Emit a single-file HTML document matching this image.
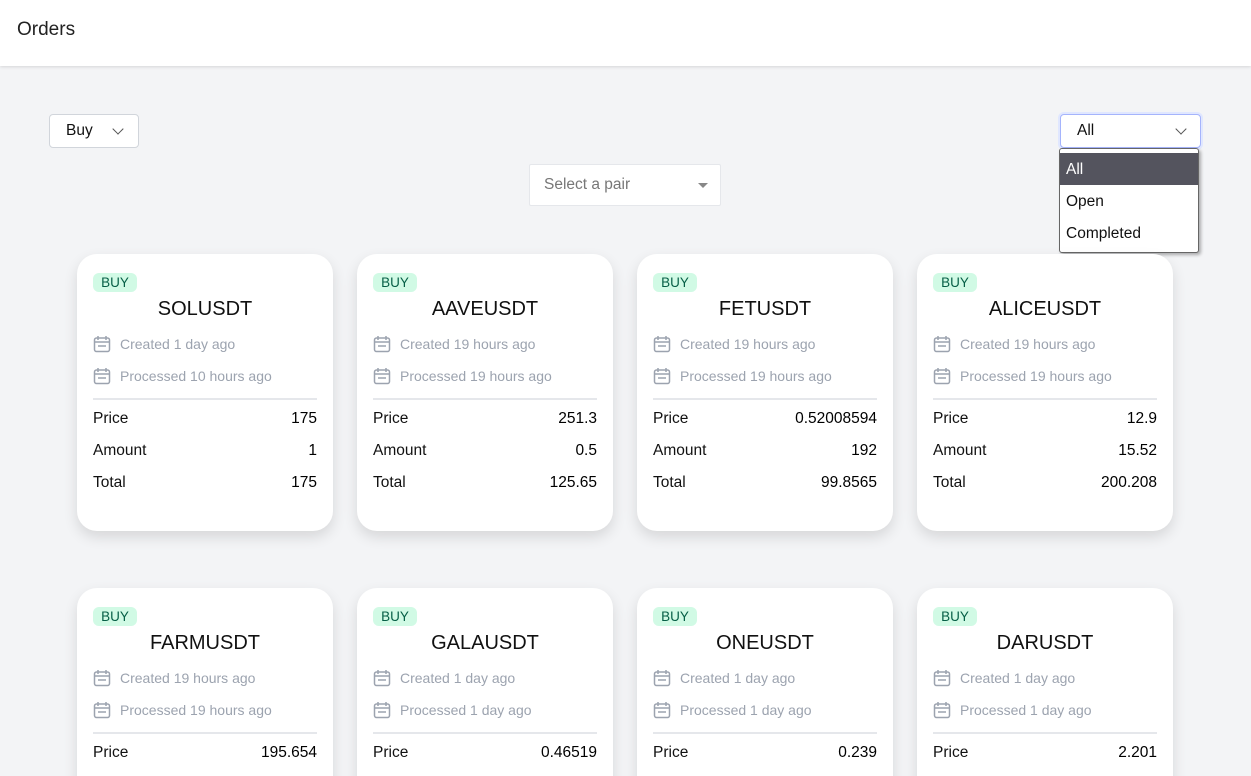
<!DOCTYPE html><html><head><style>
*{box-sizing:border-box;margin:0;padding:0}
html,body{width:1251px;height:776px;overflow:hidden}
body{background:#f3f4f6;font-family:"Liberation Sans",sans-serif;color:#111;position:relative}
.hdr{position:absolute;left:0;top:0;width:1251px;height:66px;background:#fff;box-shadow:0 1px 3px rgba(0,0,0,.12)}
.hdr h1{position:absolute;left:17px;top:19px;font-size:19px;font-weight:normal;color:#222}
.sel{position:absolute;background:#fff;border:1px solid #d1d5db;border-radius:4px;font-size:15.5px}
.chev{position:absolute;width:8px;height:8px;border-right:1.5px solid #555;border-bottom:1.5px solid #555;transform:rotate(45deg)}
.card{position:absolute;width:256px;height:277px;background:#fff;border-radius:20px;box-shadow:0 6px 14px rgba(0,0,0,.12);padding:0 16px}
.badge{position:absolute;left:16px;top:19px;width:44px;height:19px;background:#d1fae5;color:#065f46;font-size:13.5px;border-radius:6px;text-align:center;line-height:19px}
.title{position:absolute;left:0;right:0;top:44px;text-align:center;font-size:20px}
.meta{position:absolute;left:16px;font-size:14px;color:#9ca3af;display:flex;align-items:center}
.meta svg{margin-right:9px}
.hr{position:absolute;left:16px;right:16px;top:144px;height:2px;background:#e5e7eb}
.row{position:absolute;left:16px;right:16px;display:flex;justify-content:space-between;font-size:15.5px}
.row b{font-weight:normal;color:#000}
</style></head><body>
<div class="hdr"><h1>Orders</h1></div>
<div class="sel" style="left:49px;top:114px;width:90px;height:34px"><span style="position:absolute;left:16px;top:7px">Buy</span><div class="chev" style="left:64px;top:10px"></div></div>
<div class="sel" style="left:529px;top:164px;width:192px;height:42px;border-color:#e5e7eb;border-radius:2px"><span style="position:absolute;left:14px;top:11px;color:#777">Select a pair</span><div style="position:absolute;left:168px;top:18px;border:5px solid transparent;border-top:5px solid #888"></div></div>
<div class="sel" style="left:1060px;top:114px;width:141px;height:34px;border-color:#a5b4fc;box-shadow:0 0 0 2px #e0e7ff"><span style="position:absolute;left:16px;top:7px">All</span><div class="chev" style="left:116px;top:10px"></div></div>
<div style="position:absolute;left:1059px;top:148px;width:140px;height:105px;background:#fff;border:1px solid #666;border-radius:3px;box-shadow:2px 2px 3px rgba(0,0,0,.3);font-size:15.5px">
<div style="margin-top:4px;height:32px;background:#54545e;color:#fff;padding:8px 6px 0">All</div>
<div style="height:32px;padding:8px 6px 0">Open</div>
<div style="height:32px;padding:8px 6px 0">Completed</div></div>
<div id="cards"></div>
<script>
const d=[["SOLUSDT","1 day","10 hours","175","1","175"],["AAVEUSDT","19 hours","19 hours","251.3","0.5","125.65"],["FETUSDT","19 hours","19 hours","0.52008594","192","99.8565"],["ALICEUSDT","19 hours","19 hours","12.9","15.52","200.208"],["FARMUSDT","19 hours","19 hours","195.654","",""],["GALAUSDT","1 day","1 day","0.46519","",""],["ONEUSDT","1 day","1 day","0.239","",""],["DARUSDT","1 day","1 day","2.201","",""]];
const ic='<svg width="18" height="18" viewBox="0 0 18 18" fill="none" stroke="#9ca3af" stroke-width="1.5"><rect x="1.5" y="3" width="15" height="13.5" rx="2"/><path d="M5 1v4M13 1v4M1.5 7h15M5 11h8"/></svg>';
let h='';d.forEach((c,i)=>{const x=77+(i%4)*280,y=254+Math.floor(i/4)*334;
h+=`<div class="card" style="left:${x}px;top:${y}px"><div class="badge">BUY</div><div class="title">${c[0]}</div>
<div class="meta" style="top:81px">${ic}Created ${c[1]} ago</div><div class="meta" style="top:113px">${ic}Processed ${c[2]} ago</div><div class="hr"></div>
<div class="row" style="top:156px"><span>Price</span><b>${c[3]}</b></div>
<div class="row" style="top:188px"><span>Amount</span><b>${c[4]}</b></div>
<div class="row" style="top:220px"><span>Total</span><b>${c[5]}</b></div></div>`});
document.getElementById('cards').innerHTML=h;
</script>
</body></html>
